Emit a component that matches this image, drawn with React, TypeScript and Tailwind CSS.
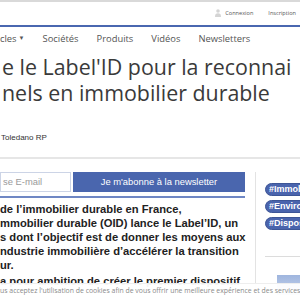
import React from "react";

const navItems = ["cles", "Sociétés", "Produits", "Vidéos", "Newsletters"];
const tags = ["#Immobilier", "#Environnement", "#Dispositif"];

function UserIcon() {
  return (
    <svg width="6" height="8" viewBox="0 0 6 8" fill="#d4d4d4">
      <circle cx="3" cy="2" r="1.8" />
      <path d="M0 8 C0 5 1.2 4.3 3 4.3 C4.8 4.3 6 5 6 8 Z" />
    </svg>
  );
}

export default function App() {
  return (
    <div className="relative w-[300px] h-[300px] overflow-hidden bg-white font-['Open_Sans',sans-serif]">
      {/* top bar */}
      <div className="h-[2px] bg-[#d9d9d9]" />
      <div className="h-[23px] flex items-center justify-end gap-[15px] pr-[4px] text-[5.6px] text-[#555]">
        <div className="flex items-center gap-[4px]">
          <UserIcon />
          <span>Connexion</span>
        </div>
        <span>Inscription</span>
      </div>
      <div className="h-[2px] bg-[#4a67b0]" />

      {/* nav */}
      <nav className="h-[24px] flex items-center gap-[18px] text-[9.4px] text-[#555]">
        <span className="flex items-center gap-[2px]">
          {navItems[0]}
          <span className="text-[6px]">▼</span>
        </span>
        {navItems.slice(1).map((n) => (
          <span key={n}>{n}</span>
        ))}
      </nav>

      {/* title */}
      <h1 className="mt-[3px] pl-[2px] text-[21.4px] leading-[26px] text-[#3a3a3a] whitespace-nowrap">
        e le Label'ID pour la reconnai
        <br />
        nels en immobilier durable
      </h1>

      <div className="mt-[26px] pl-[1px] text-[8px] leading-[12px] text-[#333] font-['Liberation_Sans',sans-serif]">
        Toledano RP
      </div>
      <div className="mt-[13px] h-[2px] bg-[#e6e6e6]" />

      <div className="flex pt-[13px]">
        {/* left column */}
        <div className="w-[245px] shrink-0 font-['Liberation_Sans',sans-serif]">
          <div className="pb-[4px] border-b-2 border-[#6f87c4]">
            <div className="flex gap-[2px] h-[20px]">
              <div className="w-[71px] border border-[#ccd4e6] flex items-center pl-[2px] text-[9.4px] text-[#9a9a9a]">
                se E-mail
              </div>
              <button className="flex-1 bg-[#4a66ae] text-white text-[9.4px] flex items-center justify-center">
                Je m'abonne à la newsletter
              </button>
            </div>
          </div>
          <div className="pt-[4px] text-[11.2px] leading-[14px] font-bold text-[#222] whitespace-nowrap">
            <p>
              de l’immobilier durable en France,
              <br />
              mmobilier durable (OID) lance le Label’ID, un
              <br />
              s dont l’objectif est de donner les moyens aux
              <br />
              ndustrie immobilière d’accélérer la transition
              <br />
              ur.
            </p>
            <p className="mt-[2px]">a pour ambition de créer le premier dispositif</p>
          </div>
        </div>

        {/* divider */}
        <div className="ml-[10px] w-px bg-[#e3e3e3] h-[120px]" />

        {/* right column */}
        <div className="ml-[9px] pt-[11px] flex-1 min-w-0">
          <div className="flex flex-col gap-[4px]">
            {tags.map((t) => (
              <span
                key={t}
                className="self-start whitespace-nowrap rounded-full bg-[#4a64ad] border border-[#3d5596] px-[3px] h-[13px] flex items-center text-[9px] font-bold text-white font-['Liberation_Sans',sans-serif]"
              >
                {t}
              </span>
            ))}
          </div>
          <div className="mt-[26px] h-px bg-[#dcdcdc]" />
          <div className="mt-[18px] ml-[12px] h-[20px] bg-gradient-to-b from-[#9fb5de] to-[#c6d3ec]" />
        </div>
      </div>

      {/* cookie banner */}
      <div className="absolute left-0 right-0 bottom-0 h-[17px] bg-white/95 border-t border-[#eeeeee] flex items-start pt-[2px] text-[6.9px] text-[#8a8a8a] whitespace-nowrap">
        us acceptez l'utilisation de cookies afin de vous offrir une meilleure expérience et des services
      </div>
    </div>
  );
}
